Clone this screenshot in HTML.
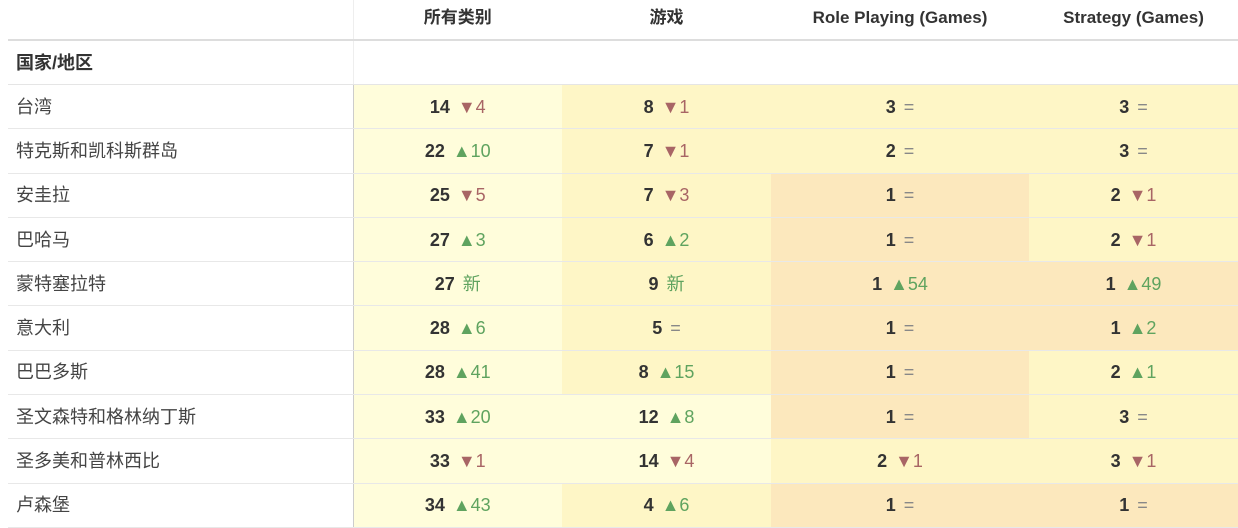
<!DOCTYPE html><html><head><meta charset="utf-8"><style>
body{margin:0;background:#fff;font-family:"Liberation Sans","Noto Sans CJK SC",sans-serif;color:#333;}
table{position:absolute;left:8px;top:0;border-collapse:collapse;width:1230px;table-layout:fixed}
td,th{padding:0;font-size:18px;line-height:20px}
th{height:40px;font-size:17px;font-weight:bold;color:#333;text-align:center;border-bottom:2px solid #ddd;vertical-align:middle;padding-bottom:4px;box-sizing:border-box}
th:first-child{border-right:1px solid #eee}
tr.sub td{height:43px;font-weight:bold;border-bottom:1px solid #e5e5e5}
tr.sub td:first-child{padding-left:8px;border-right:1px solid #eee}
tr.r td{height:43.3px;border-bottom:1px solid #e8e8e8;text-align:center}
tr.r td:first-child{text-align:left;padding-left:8px;color:#444;border-right:1px solid #ccc}
b{color:#333;margin-right:8px}
.a{background:#fffddb}.b{background:#fef6c6}.c{background:#fce8bd}
.u{color:#5fa35f}.d{color:#a86565}.e{color:#888}
</style></head><body>
<table>
<colgroup><col style="width:345px"><col style="width:209px"><col style="width:209px"><col style="width:258px"><col style="width:209px"></colgroup>
<tr><th></th><th>所有类别</th><th>游戏</th><th>Role Playing (Games)</th><th>Strategy (Games)</th></tr>
<tr class="sub"><td>国家/地区</td><td></td><td></td><td></td><td></td></tr>
<tr class="r"><td>台湾</td><td class="a"><b>14</b><span class="d">▼4</span></td><td class="b"><b>8</b><span class="d">▼1</span></td><td class="b"><b>3</b><span class="e">=</span></td><td class="b"><b>3</b><span class="e">=</span></td></tr>
<tr class="r"><td>特克斯和凯科斯群岛</td><td class="a"><b>22</b><span class="u">▲10</span></td><td class="b"><b>7</b><span class="d">▼1</span></td><td class="b"><b>2</b><span class="e">=</span></td><td class="b"><b>3</b><span class="e">=</span></td></tr>
<tr class="r"><td>安圭拉</td><td class="a"><b>25</b><span class="d">▼5</span></td><td class="b"><b>7</b><span class="d">▼3</span></td><td class="c"><b>1</b><span class="e">=</span></td><td class="b"><b>2</b><span class="d">▼1</span></td></tr>
<tr class="r"><td>巴哈马</td><td class="a"><b>27</b><span class="u">▲3</span></td><td class="b"><b>6</b><span class="u">▲2</span></td><td class="c"><b>1</b><span class="e">=</span></td><td class="b"><b>2</b><span class="d">▼1</span></td></tr>
<tr class="r"><td>蒙特塞拉特</td><td class="a"><b>27</b><span class="u">新</span></td><td class="b"><b>9</b><span class="u">新</span></td><td class="c"><b>1</b><span class="u">▲54</span></td><td class="c"><b>1</b><span class="u">▲49</span></td></tr>
<tr class="r"><td>意大利</td><td class="a"><b>28</b><span class="u">▲6</span></td><td class="b"><b>5</b><span class="e">=</span></td><td class="c"><b>1</b><span class="e">=</span></td><td class="c"><b>1</b><span class="u">▲2</span></td></tr>
<tr class="r"><td>巴巴多斯</td><td class="a"><b>28</b><span class="u">▲41</span></td><td class="b"><b>8</b><span class="u">▲15</span></td><td class="c"><b>1</b><span class="e">=</span></td><td class="b"><b>2</b><span class="u">▲1</span></td></tr>
<tr class="r"><td>圣文森特和格林纳丁斯</td><td class="a"><b>33</b><span class="u">▲20</span></td><td class="a"><b>12</b><span class="u">▲8</span></td><td class="c"><b>1</b><span class="e">=</span></td><td class="b"><b>3</b><span class="e">=</span></td></tr>
<tr class="r"><td>圣多美和普林西比</td><td class="a"><b>33</b><span class="d">▼1</span></td><td class="a"><b>14</b><span class="d">▼4</span></td><td class="b"><b>2</b><span class="d">▼1</span></td><td class="b"><b>3</b><span class="d">▼1</span></td></tr>
<tr class="r"><td>卢森堡</td><td class="a"><b>34</b><span class="u">▲43</span></td><td class="b"><b>4</b><span class="u">▲6</span></td><td class="c"><b>1</b><span class="e">=</span></td><td class="c"><b>1</b><span class="e">=</span></td></tr>
</table>
</body></html>
